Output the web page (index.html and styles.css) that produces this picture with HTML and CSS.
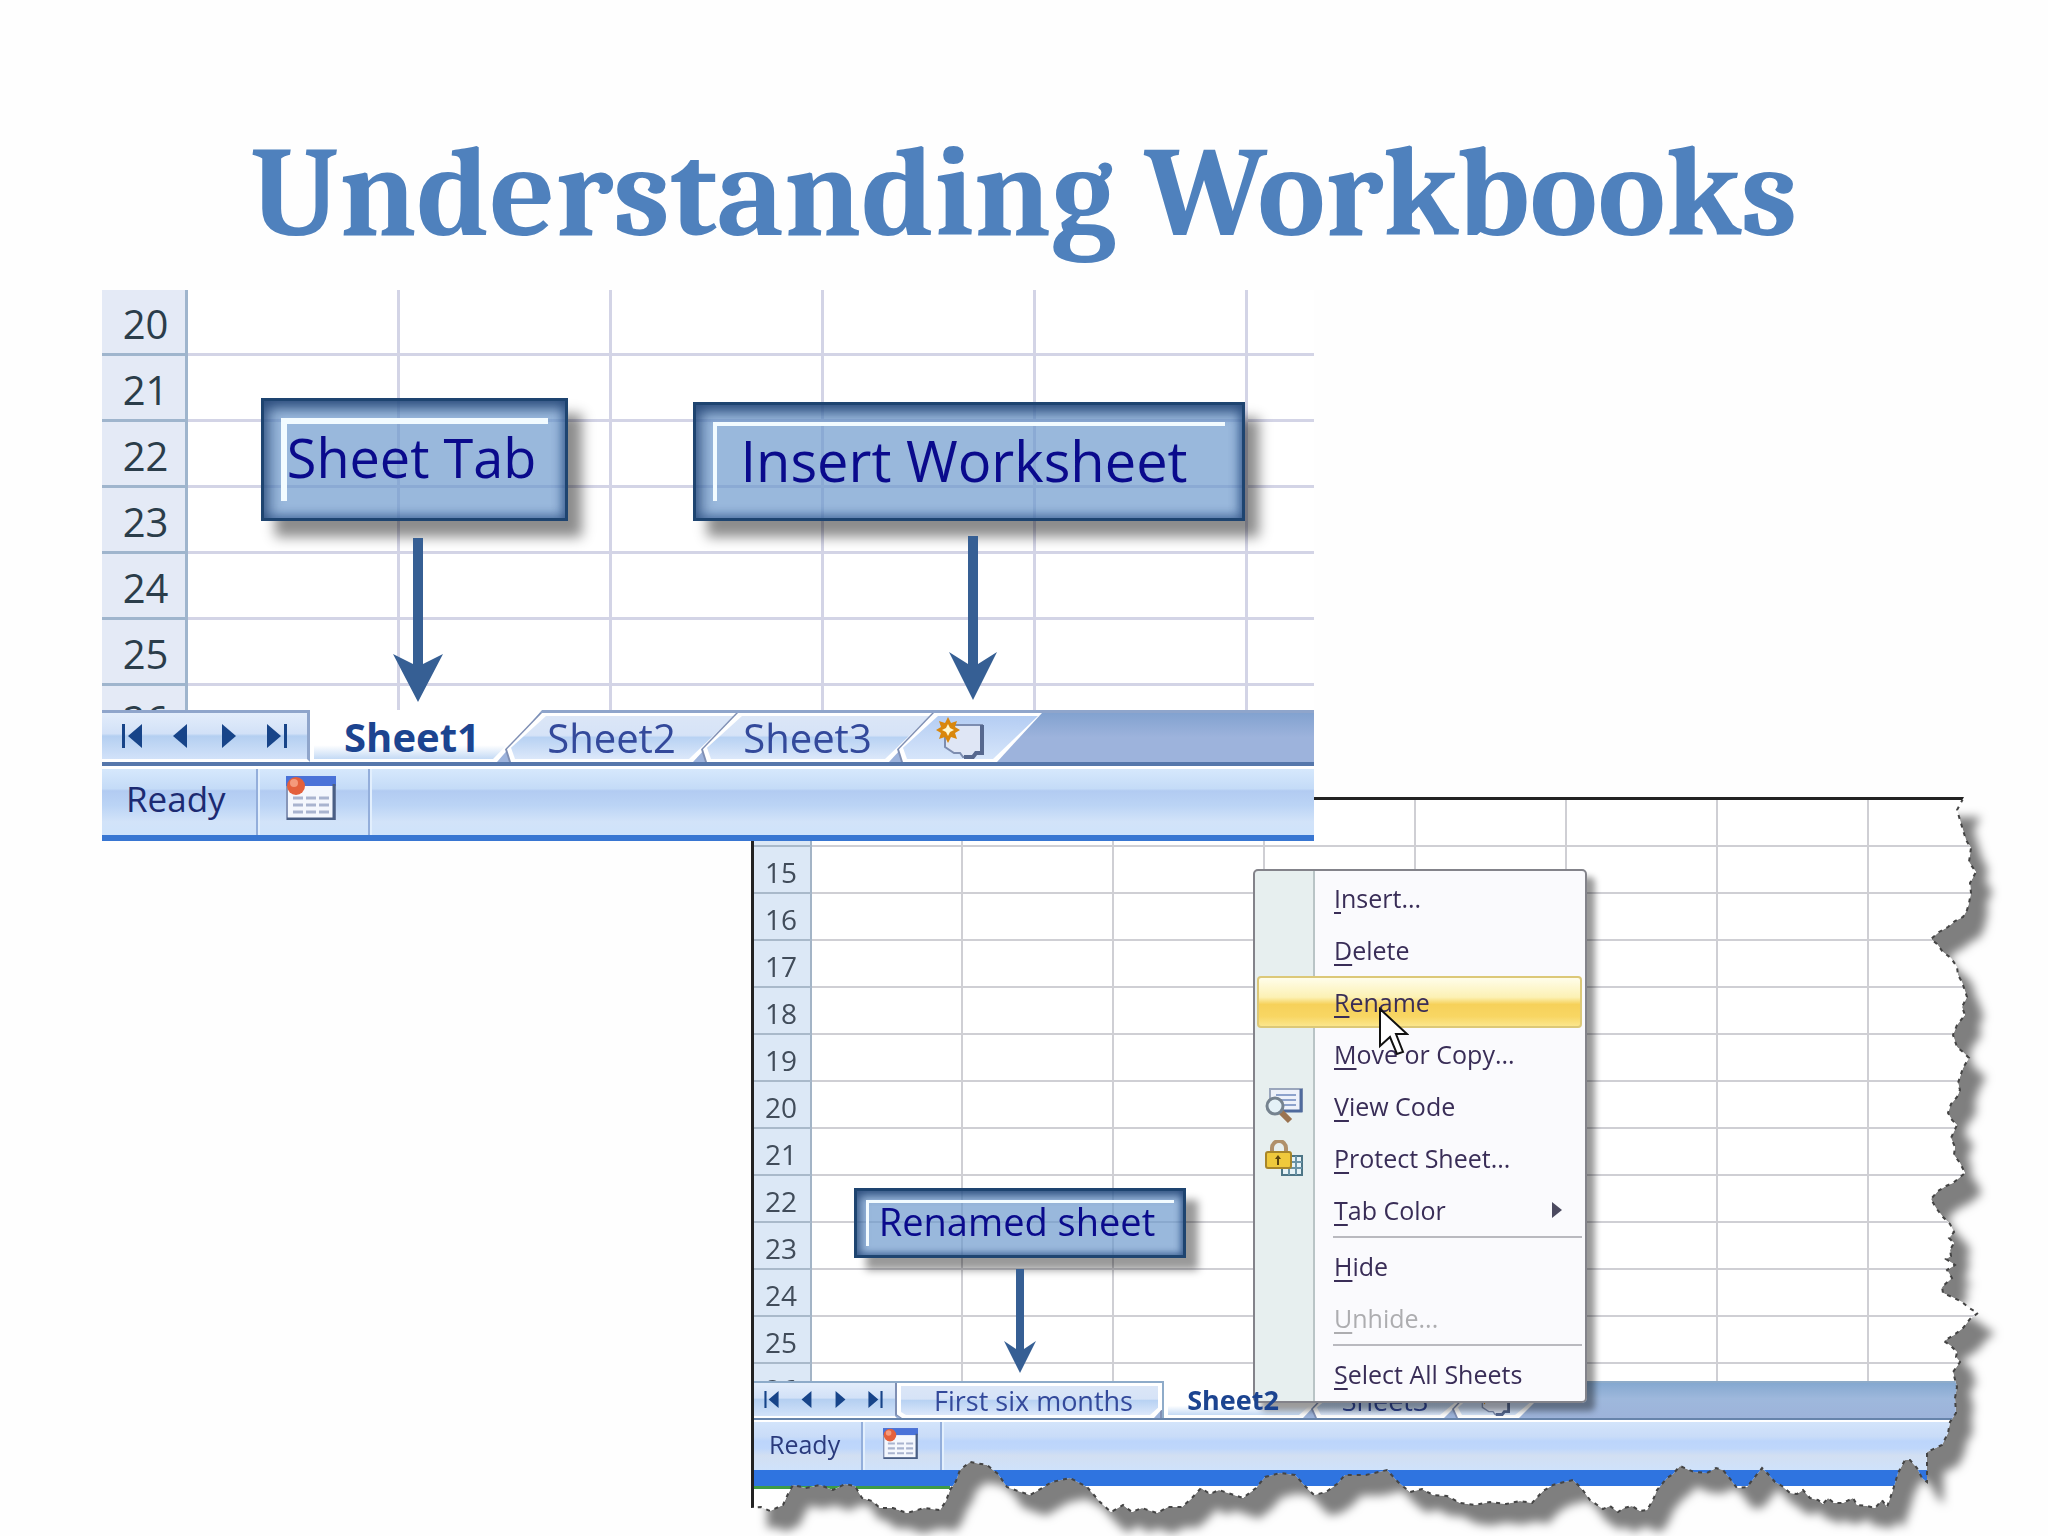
FILE: index.html
```html
<!DOCTYPE html>
<html lang="en">
<head>
    <meta charset="UTF-8">
    <meta name="viewport" content="width=device-width, initial-scale=1.0">
    <title>Understanding Workbooks</title>
    <link rel="stylesheet" href="styles.css">
</head>
<body>
    <!-- Shared icons -->
    <svg class="defs" aria-hidden="true">
        <symbol id="nav-first" viewBox="0 0 20 24"><path d="M0 0h3v24H0zM20 0v24L6 12z"/></symbol>
        <symbol id="nav-prev" viewBox="0 0 20 24"><path d="M17 0v24L3 12z"/></symbol>
        <symbol id="nav-next" viewBox="0 0 20 24"><path d="M3 0v24l14-12z"/></symbol>
        <symbol id="nav-last" viewBox="0 0 20 24"><path d="M17 0h3v24h-3zM0 0v24l14-12z"/></symbol>
        <symbol id="macro" viewBox="0 0 50 44">
            <rect x="1" y="1" width="48" height="42" fill="#f4f7fd" stroke="#8796b8" stroke-width="2"/>
            <rect x="0" y="0" width="50" height="10" fill="#4a72d8"/>
            <path d="M48 8v35H1" fill="none" stroke="#4a5f85" stroke-width="3"/>
            <path d="M7 22h10M20 22h10M33 22h10M7 29h10M20 29h10M33 29h10M7 36h10M20 36h10M33 36h10" stroke="#a9b4cf" stroke-width="3"/>
            <circle cx="10" cy="10" r="9" fill="#e4603c"/>
            <circle cx="8" cy="7" r="4" fill="#f59a7c"/>
        </symbol>
        <symbol id="new-sheet" viewBox="0 0 48 42">
            <path d="M9 8h37v28h-5l-4 4H27l-3-4h-6l-9-6z" fill="#dfe6f5" stroke="#7d8db0" stroke-width="2"/>
            <path d="M46 8v28h-6l-3 4H28" fill="none" stroke="#56688f" stroke-width="4"/>
            <path d="M12 0l3 6 6-2-2 6 5 3-5 3 2 6-6-2-3 6-3-6-6 2 2-6-5-3 5-3-2-6 6 2z" fill="#d9870c"/>
            <path d="M12 7l2 4 4 2-4 2-2 4-2-4-4-2 4-2z" fill="#fff8d0"/>
        </symbol>
        <clipPath id="torn">
            <path id="torn-shape" transform="translate(-751 -797)" d="M751 797H1964L1957 810 1960 820 1963 830 1966 840 1971 848 1969 862 1976 872 1970 883 1971 893 1969 903 1967 910 1963 917 1955 921 1948 927 1939 932 1931 939 1937 944 1943 952 1951 958 1957 967 1958 975 1962 982 1967 997 1962 1007 1965 1015 1957 1025 1953 1035 1957 1047 1963 1052 1969 1058 1963 1068 1958 1083 1960 1090 1957 1097 1951 1104 1948 1113 1952 1120 1957 1125 1951 1138 1955 1147 1954 1155 1960 1163 1965 1173 1959 1178 1953 1183 1946 1186 1938 1191 1931 1199 1936 1208 1943 1217 1950 1224 1954 1232 1949 1238 1954 1243 1950 1250 1951 1256 1946 1259 1955 1265 1947 1270 1952 1278 1942 1287 1943 1293 1952 1297 1962 1302 1969 1308 1978 1313 1970 1319 1963 1328 1954 1335 1944 1341 1951 1346 1957 1352 1956 1357 1960 1362 1953 1372 1957 1387 1955 1398 1956 1413 1950 1422 1948 1433 1942 1445 1927 1452 1927 1482 1922 1478 1917 1468 1910 1460 1905 1460 1898 1473 1893 1490 1887 1507 1882 1500 1875 1508 1867 1506 1857 1505 1853 1498 1843 1503 1834 1503 1828 1498 1823 1504 1818 1500 1810 1498 1803 1490 1797 1494 1790 1493 1782 1486 1775 1482 1768 1474 1762 1468 1754 1478 1747 1487 1737 1488 1731 1480 1723 1470 1716 1468 1707 1473 1694 1472 1680 1466 1673 1474 1667 1478 1657 1490 1653 1500 1647 1510 1640 1511 1632 1506 1624 1508 1618 1512 1610 1506 1603 1509 1590 1500 1582 1489 1573 1480 1560 1483 1553 1485 1543 1491 1532 1503 1520 1501 1506 1504 1490 1502 1475 1505 1460 1503 1447 1496 1433 1495 1422 1489 1410 1492 1398 1482 1387 1470 1366 1475 1345 1475 1337 1484 1326 1492 1314 1495 1305 1486 1295 1475 1280 1473 1265 1477 1256 1488 1243 1498 1231 1494 1219 1490 1210 1494 1201 1488 1191 1499 1182 1507 1168 1507 1157 1513 1142 1508 1132 1512 1123 1505 1111 1512 1100 1502 1087 1487 1070 1478 1052 1482 1042 1488 1030 1495 1018 1491 1007 1487 998 1474 987 1465 970 1462 960 1470 956 1481 950 1490 946 1501 940 1510 924 1508 907 1513 893 1508 880 1508 872 1501 862 1498 855 1486 845 1484 833 1490 820 1485 806 1488 793 1485 788 1494 783 1505 770 1511 761 1507 751 1508Z"/>
        </clipPath>
    </svg>

    <main class="slide">
        <h1>Understanding Workbooks</h1>

        <section class="sheet sheet-large" aria-label="Sheet tab and insert worksheet">
            <div class="grid">
                <table data-first="20" data-last="26" data-cols="6"></table>
            </div>
            <div class="tab-bar">
                <div class="nav">
                    <button type="button" aria-label="First sheet"><svg><use href="#nav-first"/></svg></button>
                    <button type="button" aria-label="Previous sheet"><svg><use href="#nav-prev"/></svg></button>
                    <button type="button" aria-label="Next sheet"><svg><use href="#nav-next"/></svg></button>
                    <button type="button" aria-label="Last sheet"><svg><use href="#nav-last"/></svg></button>
                </div>
                <button type="button" class="tab active first"><span>Sheet1</span></button>
                <button type="button" class="tab"><span>Sheet2</span></button>
                <button type="button" class="tab"><span>Sheet3</span></button>
                <button type="button" class="tab insert" aria-label="Insert worksheet"><svg><use href="#new-sheet"/></svg></button>
            </div>
            <div class="status-bar">
                <span class="ready">Ready</span>
                <button type="button" class="macro" aria-label="Record macro"><svg><use href="#macro"/></svg></button>
            </div>

            <div class="callout callout-tab">Sheet Tab</div>
            <svg class="arrow arrow-tab" viewBox="0 0 50 166"><path d="M20 2h10v126l20-10-25 48L0 118l20 10z"/></svg>
            <div class="callout callout-insert">Insert Worksheet</div>
            <svg class="arrow arrow-insert" viewBox="0 0 50 166"><path d="M20 0h10v128l19-12-24 48L1 116l19 12z"/></svg>
        </section>

        <div class="paper">
            <section class="sheet sheet-small" aria-label="Renaming a sheet">
                <div class="grid">
                    <table data-first="14" data-last="26" data-cols="8"></table>
                </div>
                <div class="tab-bar">
                    <div class="nav">
                        <button type="button" aria-label="First sheet"><svg><use href="#nav-first"/></svg></button>
                        <button type="button" aria-label="Previous sheet"><svg><use href="#nav-prev"/></svg></button>
                        <button type="button" aria-label="Next sheet"><svg><use href="#nav-next"/></svg></button>
                        <button type="button" aria-label="Last sheet"><svg><use href="#nav-last"/></svg></button>
                    </div>
                    <button type="button" class="tab straight"><span>First six months</span></button>
                    <button type="button" class="tab active"><span>Sheet2</span></button>
                    <button type="button" class="tab"><span>Sheet3</span></button>
                    <button type="button" class="tab insert" aria-label="Insert worksheet"><svg><use href="#new-sheet"/></svg></button>
                </div>
                <div class="status-bar">
                    <span class="ready">Ready</span>
                    <button type="button" class="macro" aria-label="Record macro"><svg><use href="#macro"/></svg></button>
                </div>
                <div class="page-foot"></div>

                <div class="callout callout-renamed">Renamed sheet</div>
                <svg class="arrow arrow-renamed" viewBox="0 0 32 104"><path d="M12 0h8v80l12-8-16 32L0 72l12 8z"/></svg>

                <div class="menu">
                    <button type="button"><span><u>I</u>nsert...</span></button>
                    <button type="button"><span><u>D</u>elete</span></button>
                    <button type="button" class="hover"><span><u>R</u>ename</span></button>
                    <button type="button"><span><u>M</u>ove or Copy...</span></button>
                    <button type="button">
                        <svg class="icon" viewBox="0 0 38 36">
                            <path d="M5 1h32v22H5z" fill="#eef2fa" stroke="#9aa6bc" stroke-width="2"/>
                            <path d="M36 1v22H18" fill="none" stroke="#4f6a9c" stroke-width="3"/>
                            <path d="M11 7h20M14 12h17M18 17h13" stroke="#8ea3cc" stroke-width="2"/>
                            <path d="M16 24l9 9" stroke="#9a7350" stroke-width="6"/>
                            <circle cx="10" cy="18" r="8" fill="#e4f1f7" stroke="#76838f" stroke-width="3"/>
                        </svg>
                        <span><u>V</u>iew Code</span>
                    </button>
                    <button type="button">
                        <svg class="icon" viewBox="0 0 38 36">
                            <path d="M17 16h20v19H17z" fill="#e6f2f6" stroke="#4d7586" stroke-width="2"/>
                            <path d="M17 22h20M17 28h20M24 16v19M31 16v19" stroke="#6a93a6" stroke-width="2"/>
                            <path d="M7 13V8a7 7 0 0 1 14 0v5" fill="none" stroke="#b0906a" stroke-width="4"/>
                            <rect x="1" y="12" width="25" height="16" rx="2" fill="#efc93c" stroke="#a8862a" stroke-width="2"/>
                            <path d="M13 15l3 4h-2v6h-2v-6h-2z" fill="#5a4410"/>
                        </svg>
                        <span><u>P</u>rotect Sheet...</span>
                    </button>
                    <button type="button">
                        <span><u>T</u>ab Color</span>
                        <svg class="more" viewBox="0 0 10 16"><path d="M0 0v16l10-8z"/></svg>
                    </button>
                    <hr>
                    <button type="button"><span><u>H</u>ide</span></button>
                    <button type="button" disabled><span><u>U</u>nhide...</span></button>
                    <hr>
                    <button type="button"><span><u>S</u>elect All Sheets</span></button>
                </div>
                <svg class="cursor" viewBox="0 0 30 50"><path d="M1 2v37l10-9 7 17 6-2-7-18h11z"/></svg>
            </section>
            <svg class="torn-edge"><use href="#torn-shape"/></svg>
        </div>
    </main>

    <script>
        // Fill each grid with its numbered rows
        document.querySelectorAll('.grid table').forEach(table => {
            const { first, last, cols } = table.dataset;
            for (let n = Number(first); n <= Number(last); n++) {
                const row = table.insertRow();
                const head = document.createElement('th');
                head.scope = 'row';
                head.textContent = n;
                row.appendChild(head);
                for (let c = 0; c < Number(cols); c++) {
                    row.insertCell();
                }
            }
        });
    </script>
</body>
</html>
```
FILE: styles.css
```css
* {
    box-sizing: border-box;
}
body {
    margin: 0;
    background: #fefefe;
    font-family: "Open Sans", "Noto Sans", sans-serif;
    overflow-x: hidden;
}
button {
    margin: 0;
    padding: 0;
    border: none;
    background: none;
    font: inherit;
    color: inherit;
}
svg {
    display: block;
}
.defs {
    position: absolute;
    width: 0;
    height: 0;
}
.slide {
    min-height: 100vh;
}
h1 {
    margin: 0;
    padding: 114px 0 16px;
    text-align: center;
    font-family: Cambria, Caladea, "Liberation Serif", serif;
    font-size: 128px;
    line-height: 160px;
    font-weight: bold;
    color: #4f81bd;
}

/* Spreadsheet */
.sheet {
    position: relative;
}
.sheet-large {
    z-index: 1;
    margin: 0 734px 0 102px;
}
.grid {
    overflow: hidden;
    background: #fff;
}
.grid table {
    width: 100%;
    table-layout: fixed;
    border-collapse: separate;
    border-spacing: 0;
}
.grid th {
    font-weight: normal;
    text-align: center;
    line-height: 1;
}
.grid td {
    padding: 0;
}
.grid td:last-child {
    width: auto;
    border-right: none;
}
.sheet-large .grid {
    height: 420px;
}
.sheet-large tr {
    height: 66px;
}
.sheet-large th {
    width: 86px;
    padding: 4px 0 0 4px;
    font-size: 40px;
    color: #2b3d4a;
    background: #e4eaf6;
    border-right: 3px solid #9fb5cd;
    border-bottom: 3px solid #9fb5cd;
}
.sheet-large td {
    width: 212px;
    border-right: 3px solid #d3d4e6;
    border-bottom: 3px solid #d3d4e6;
}

/* Tabs */
.tab-bar {
    --slant: 45px;
    display: flex;
    height: 56px;
    border-top: 3px solid #8fa5cb;
    border-bottom: 4px solid #5677ab;
    background: linear-gradient(#82a2d0, #9db3dc 50%, #9db3dc);
}
.nav {
    display: flex;
    width: 208px;
    padding: 0 20px;
    align-items: center;
    justify-content: space-between;
    background: linear-gradient(#e3edfb, #d2e1f7 45%, #b4cff1 50%, #d2e2f9);
    border-right: 3px solid #8fa5cb;
    border-bottom: 3px solid #fff;
}
.nav svg {
    width: 20px;
    height: 24px;
    fill: #174489;
}
.tab {
    position: relative;
    width: 241px;
    margin-left: calc(-1 * var(--slant));
    padding-right: 12px;
    font-size: 40px;
    line-height: 47px;
    color: #33499b;
    filter: drop-shadow(-2px 0 0 #7f8fb4);
}
.tab::before,
.tab::after {
    content: "";
    position: absolute;
    inset: 0;
    clip-path: polygon(var(--slant) 0, 100% 0, calc(100% - var(--slant)) 100%, 14px 100%, 10px 74%);
    background: #fff;
}
.tab::after {
    inset: 3px 4px;
    background: linear-gradient(#dbe6f7, #d6e3f7 45%, #b8d2f3 50%, #dce8fa);
}
.tab span,
.tab svg {
    position: relative;
    z-index: 1;
}
.tab.active {
    font-weight: bold;
    color: #1c4490;
}
.tab.active::after {
    background: linear-gradient(#fff 70%, #c4daf5);
}
.tab.first {
    width: 232px;
    margin-left: 0;
    padding-right: 28px;
    filter: none;
    margin-top: -3px;
    line-height: 54px;
}
.tab.first::before,
.tab.first::after {
    clip-path: polygon(0 0, 100% 0, calc(100% - var(--slant)) 100%, 0 100%);
}
.tab.insert {
    width: 153px;
}
.tab.insert::after {
    background: linear-gradient(#b4cdf3, #d6e5fa);
}
.tab.insert svg {
    width: 48px;
    height: 42px;
    margin: 0 auto;
}

/* Status bar */
.status-bar {
    display: flex;
    align-items: stretch;
    height: 75px;
    border-top: 3px solid #fff;
    border-bottom: 6px solid #3876d2;
    background: linear-gradient(#d6e8fc, #c4dbf7 30%, #b2cbf2 33%, #bbd4f5 55%, #d2e3f9 80%, #cfe3fb);
    font-size: 35px;
    color: #1c2a72;
}
.ready {
    width: 154px;
    padding-left: 24px;
    line-height: 60px;
}
.macro {
    width: 114px;
    padding: 0 28px 8px;
    border-left: 2px solid #93aedb;
    border-right: 2px solid #93aedb;
    box-shadow: inset 2px 0 #e2effd, 2px 0 #e2effd;
}
.macro svg {
    width: 50px;
    height: 44px;
}

/* Callouts over the grid */
.callout {
    position: absolute;
    display: flex;
    align-items: center;
    justify-content: center;
    border: 3px solid #1e4470;
    background: rgba(104, 150, 203, 0.68);
    box-shadow: 14px 16px 12px rgba(0, 0, 0, 0.45),
        inset 0 8px 12px rgba(24, 58, 108, 0.7),
        inset 8px 0 12px rgba(24, 58, 108, 0.4),
        inset -4px -4px 8px rgba(50, 90, 150, 0.4);
    font-size: 54px;
    line-height: 1;
    color: #0a0a8c;
    white-space: nowrap;
}
.callout::before {
    content: "";
    position: absolute;
    inset: 17px;
    border-top: 4px solid #f2fbff;
    border-left: 4px solid #f2fbff;
}
.callout-tab {
    left: 159px;
    top: 108px;
    width: 307px;
    height: 123px;
    padding: 0 6px 6px 0;
}
.callout-tab::before {
    border-width: 6px 0 0 6px;
}
.callout-insert {
    left: 591px;
    top: 112px;
    width: 552px;
    height: 119px;
    padding: 0 10px 4px 0;
    font-size: 56px;
}
.arrow {
    position: absolute;
    fill: #365f94;
}
.arrow-tab,
.arrow-insert {
    top: 246px;
    width: 50px;
    height: 166px;
}
.arrow-tab {
    left: 291px;
}
.arrow-insert {
    left: 846px;
}

/* Torn page with the smaller sheet */
.paper {
    position: relative;
    margin: -44px 70px 0 751px;
    filter: drop-shadow(16px 20px 5px rgba(0, 0, 0, 0.5));
}
.sheet-small {
    clip-path: url(#torn);
    background: #fff;
    border-top: 3px solid #222;
    border-left: 3px solid #222;
}
.torn-edge {
    position: absolute;
    left: 0;
    top: 0;
    width: 100%;
    height: 100%;
    overflow: visible;
    clip-path: inset(3px -40px -40px 3px);
    fill: none;
    stroke: #444;
    stroke-width: 2px;
    stroke-dasharray: 4 5;
}
.sheet-small .grid {
    height: 581px;
}
.sheet-small tr {
    height: 47px;
}
.sheet-small th {
    width: 58px;
    padding: 4px 2px 0 0;
    font-size: 28px;
    color: #414c5a;
    background: #dce8f6;
    border-right: 2px solid #a3b4c6;
    border-bottom: 2px solid #a9b9ca;
}
.sheet-small td {
    width: 151px;
    border-right: 2px solid #cfcfd4;
    border-bottom: 2px solid #cfcfd4;
}
.sheet-small .tab-bar {
    --slant: 35px;
    height: 39px;
    border-top: 2px solid #8eabc9;
    border-bottom: 2px solid #6784ab;
    background: linear-gradient(#85a8d0, #9eb8dc 45%, #9db3da);
}
.sheet-small .nav {
    width: 143px;
    padding: 0 12px 0 10px;
    border-right-width: 2px;
    border-bottom-width: 2px;
}
.sheet-small .nav svg {
    width: 15px;
    height: 17px;
}
.sheet-small .tab {
    width: 176px;
    font-size: 27px;
    line-height: 33px;
}
.sheet-small .straight {
    width: 267px;
    margin-left: 0;
    padding: 0 0 0 8px;
    border-right: 2px solid #8eabc9;
}
.sheet-small .straight::before,
.sheet-small .straight::after {
    clip-path: polygon(0 0, 100% 0, 100% 75%, calc(100% - 8px) 100%, 5px 100%, 0 90%);
}
.sheet-small .active {
    width: 174px;
    margin-left: 0;
    padding-right: 36px;
    margin-top: -2px;
    line-height: 37px;
    filter: none;
}
.sheet-small .active::before,
.sheet-small .active::after {
    clip-path: polygon(0 0, 100% 0, calc(100% - var(--slant)) 100%, 0 100%);
}
.sheet-small .insert {
    width: 110px;
}
.sheet-small .insert svg {
    width: 34px;
    height: 30px;
}
.sheet-small .status-bar {
    height: 66px;
    border-top-width: 2px;
    border-bottom: 16px solid #2f74e0;
    background: linear-gradient(#d3e4fb, #c9dcf8 30%, #bcd5fb 40%, #bfd7fb 55%, #d2dff2 70%, #cfe2fb);
    font-size: 25px;
    color: #2a3a7c;
}
.sheet-small .ready {
    width: 107px;
    padding-left: 15px;
    line-height: 44px;
}
.sheet-small .macro {
    width: 81px;
    padding: 0 20px 6px;
}
.sheet-small .macro svg {
    width: 35px;
    height: 31px;
}
.page-foot {
    height: 34px;
    background: #fff;
}
.page-foot::before {
    content: "";
    display: block;
    width: 196px;
    height: 3px;
    background: #3f9b45;
}
.callout-renamed {
    left: 100px;
    top: 388px;
    width: 332px;
    height: 70px;
    padding: 0 6px 4px 0;
    font-size: 38px;
    box-shadow: 12px 12px 8px rgba(0, 0, 0, 0.4),
        inset 0 5px 8px rgba(24, 58, 108, 0.7),
        inset 5px 0 8px rgba(24, 58, 108, 0.4),
        inset -3px -3px 5px rgba(50, 90, 150, 0.4);
}
.callout-renamed::before {
    inset: 9px;
    border-width: 3px 0 0 3px;
}
.arrow-renamed {
    left: 250px;
    top: 469px;
    width: 32px;
    height: 104px;
}

/* Context menu */
.menu {
    position: absolute;
    left: 499px;
    top: 69px;
    width: 334px;
    padding: 1px 3px 1px 2px;
    border: 2px solid #83838a;
    border-radius: 5px;
    background: linear-gradient(90deg, #e7efef 58px, #b9c4c6 58px, #b9c4c6 60px, #fafafd 60px);
    box-shadow: 8px 8px 6px rgba(0, 0, 0, 0.4);
    font-size: 25px;
    color: #392d57;
}
.menu button {
    display: grid;
    grid-template-columns: 75px 1fr 28px;
    align-items: center;
    width: 100%;
    height: 52px;
    border: 2px solid transparent;
    border-radius: 4px;
    text-align: left;
}
.menu span {
    grid-column: 2;
    grid-row: 1;
}
.menu u {
    text-underline-offset: 4px;
    text-decoration-thickness: 2px;
}
.menu .hover {
    border-color: #dcc878;
    background: linear-gradient(#fffdea, #fcf1b4 40%, #f6d15a 55%, #f8d663 80%, #fbe68c);
}
.menu button:disabled {
    color: #adadb0;
}
.menu .icon {
    grid-column: 1;
    grid-row: 1;
    width: 38px;
    height: 36px;
    margin-left: 6px;
}
.menu .more {
    grid-column: 3;
    width: 10px;
    height: 16px;
    fill: #4b4a60;
}
.menu hr {
    height: 2px;
    margin: 0 0 2px 76px;
    border: none;
    background: #b9b9bf;
}
.cursor {
    position: absolute;
    left: 625px;
    top: 207px;
    width: 30px;
    height: 50px;
    fill: #fff;
    stroke: #111;
    stroke-width: 2px;
}
```
